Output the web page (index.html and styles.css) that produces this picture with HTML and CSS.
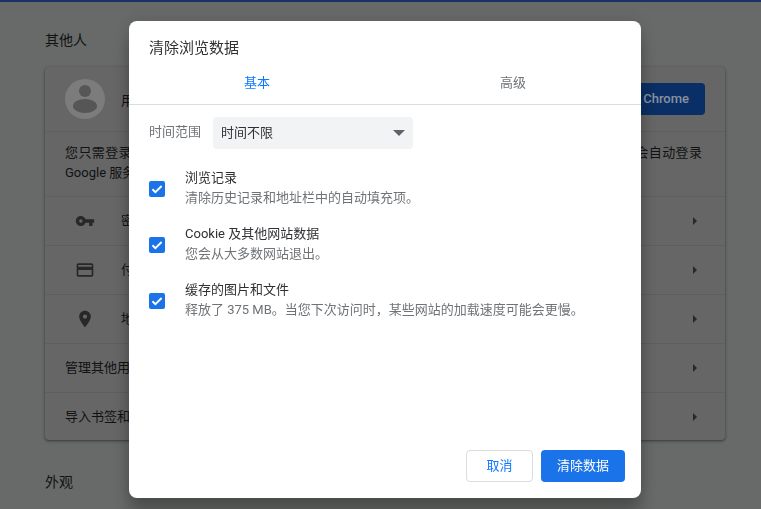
FILE: index.html
```html
<!DOCTYPE html>
<html lang="zh-CN">
<head>
    <meta charset="UTF-8">
    <title>设置</title>
    <link rel="stylesheet" href="styles.css">
</head>
<body>

    <div class="top-bar"></div>

    <!-- Settings page behind the dialog, already dimmed -->
    <main class="page">
        <h2 class="section-title">其他人</h2>
        <section class="card">
            <div class="account-row">
                <svg class="avatar" viewBox="0 0 40 40">
                    <circle cx="20" cy="20" r="20" fill="#7c7c7c"/>
                    <circle cx="20" cy="12" r="6" fill="#565656"/>
                    <ellipse cx="20" cy="27" rx="12" ry="7" fill="#565656"/>
                </svg>
                <span class="account-name">用户1</span>
                <button class="sync-button"><span class="btn-text">开启同步功能 Chrome</span></button>
            </div>
            <div class="account-info">
                <div class="info-line">您只需登录 Google 帐号，即可在所有设备上获取您的书签、历史记录、密码和其他设置。您还将会自动登录</div>
                <div>Google 服务。</div>
            </div>
            <div class="row">
                <svg class="row-icon" viewBox="0 0 24 24"><path d="M12.65 10C11.83 7.67 9.61 6 7 6c-3.31 0-6 2.69-6 6s2.69 6 6 6c2.61 0 4.83-1.67 5.65-4H17v4h4v-4h2v-4H12.65zM7 14c-1.1 0-2-.9-2-2s.9-2 2-2 2 .9 2 2-.9 2-2 2z"/></svg>
                <span class="row-label">密码</span>
                <span class="arrow"></span>
            </div>
            <div class="row">
                <svg class="row-icon" viewBox="0 0 24 24"><path d="M20 4H4c-1.11 0-1.99.89-1.99 2L2 18c0 1.11.89 2 2 2h16c1.11 0 2-.89 2-2V6c0-1.11-.89-2-2-2zm0 14H4v-6h16v6zm0-10H4V6h16v2z"/></svg>
                <span class="row-label">付款方式</span>
                <span class="arrow"></span>
            </div>
            <div class="row">
                <svg class="row-icon" viewBox="0 0 24 24"><path d="M12 2C8.13 2 5 5.13 5 9c0 5.25 7 13 7 13s7-7.75 7-13c0-3.87-3.13-7-7-7zm0 9.5c-1.38 0-2.5-1.12-2.5-2.5s1.12-2.5 2.5-2.5 2.5 1.12 2.5 2.5-1.12 2.5-2.5 2.5z"/></svg>
                <span class="row-label">地址信息</span>
                <span class="arrow"></span>
            </div>
            <div class="row row-plain">
                <span class="row-label">管理其他用户</span>
                <span class="arrow"></span>
            </div>
            <div class="row row-plain row-last">
                <span class="row-label">导入书签和设置</span>
                <span class="arrow"></span>
            </div>
        </section>
        <h2 class="section-title section-next">外观</h2>
    </main>

    <!-- Clear browsing data dialog -->
    <div class="overlay">
        <div class="dialog">
            <h1 class="dialog-title">清除浏览数据</h1>

            <div class="tabs">
                <div class="tab tab-active">基本</div>
                <div class="tab">高级</div>
            </div>

            <div class="dialog-body">
                <div class="range">
                    <span class="range-label">时间范围</span>
                    <div class="select">
                        <span class="select-value">时间不限</span>
                        <span class="select-caret"></span>
                    </div>
                </div>

                <div class="option">
                    <svg class="checkbox" viewBox="0 0 16 16"><rect width="16" height="16" rx="2" fill="#1a73e8"/><path d="M3.4 8.2l3 3 6.2-6.2" fill="none" stroke="#fff" stroke-width="2"/></svg>
                    <div class="option-text">
                        <div class="option-title">浏览记录</div>
                        <div class="option-desc">清除历史记录和地址栏中的自动填充项。</div>
                    </div>
                </div>

                <div class="option">
                    <svg class="checkbox" viewBox="0 0 16 16"><rect width="16" height="16" rx="2" fill="#1a73e8"/><path d="M3.4 8.2l3 3 6.2-6.2" fill="none" stroke="#fff" stroke-width="2"/></svg>
                    <div class="option-text">
                        <div class="option-title">Cookie 及其他网站数据</div>
                        <div class="option-desc">您会从大多数网站退出。</div>
                    </div>
                </div>

                <div class="option">
                    <svg class="checkbox" viewBox="0 0 16 16"><rect width="16" height="16" rx="2" fill="#1a73e8"/><path d="M3.4 8.2l3 3 6.2-6.2" fill="none" stroke="#fff" stroke-width="2"/></svg>
                    <div class="option-text">
                        <div class="option-title">缓存的图片和文件</div>
                        <div class="option-desc">释放了 375 MB。当您下次访问时，某些网站的加载速度可能会更慢。</div>
                    </div>
                </div>
            </div>

            <div class="dialog-buttons">
                <button class="btn btn-cancel"><span class="btn-text">取消</span></button>
                <button class="btn btn-confirm"><span class="btn-text">清除数据</span></button>
            </div>
        </div>
    </div>

</body>
</html>
```

FILE: styles.css
```css
html, body {
    height: 100%;
    margin: 0;
    overflow: hidden;
    background-color: #676a68;
    color: #111213;
    font-family: Roboto, "Noto Sans CJK SC", sans-serif;
    font-size: 13px;
}

.top-bar {
    height: 2px;
    background-color: #1c2f66;
}

.page {
    width: 680px;
    margin-left: 45px;
}

.section-title {
    margin: 0;
    padding-top: 28px;
    height: 37px;
    font-size: 14px;
    font-weight: 400;
    line-height: 20px;
}

.section-next {
    padding-top: 32px;
}

/* Card */
.card {
    background-color: #666;
    border-radius: 4px;
    box-shadow: 0 1px 2px rgba(0, 0, 0, 0.3), 0 1px 3px 1px rgba(0, 0, 0, 0.15);
}

.account-row {
    display: flex;
    align-items: center;
    height: 64px;
    padding: 0 20px;
}

.avatar {
    width: 40px;
    height: 40px;
    margin-right: 16px;
}

.account-name {
    flex: 1;
}

.sync-button {
    height: 32px;
    width: 160px;
    padding: 0 16px;
    border: none;
    border-radius: 4px;
    background-color: #0a2f66;
    color: #87929f;
    font: 500 13px Roboto, "Noto Sans CJK SC", sans-serif;
    text-align: right;
}

.btn-text {
    display: block;
    padding-bottom: 4px;
}

.account-info {
    box-sizing: border-box;
    height: 65px;
    padding: 11px 23px 0 20px;
    border-top: 1px solid #5d5e5f;
    line-height: 20px;
    white-space: nowrap;
}

.info-line {
    text-align-last: justify;
}

.row {
    display: flex;
    align-items: center;
    box-sizing: border-box;
    height: 49px;
    padding: 0 28px 0 30px;
    border-top: 1px solid #5d5e5f;
}

.row-plain {
    padding-left: 20px;
}

.row-last {
    height: 48px;
}

.row-icon {
    width: 20px;
    height: 20px;
    margin-right: 26px;
    fill: #262829;
}

.row-label {
    flex: 1;
    padding-bottom: 3px;
}

.arrow {
    width: 0;
    height: 0;
    border-left: 4px solid #262829;
    border-top: 4px solid transparent;
    border-bottom: 4px solid transparent;
}

/* Dialog */
.overlay {
    position: fixed;
    top: 0;
    left: 0;
    width: 100%;
    height: 100%;
}

.dialog {
    display: flex;
    flex-direction: column;
    box-sizing: border-box;
    width: 512px;
    height: 477px;
    margin: 21px 0 0 129px;
    background-color: #fff;
    color: #303134;
    border-radius: 8px;
    box-shadow: 0 0 16px rgba(0, 0, 0, 0.12), 0 16px 16px rgba(0, 0, 0, 0.24);
}

.dialog-title {
    margin: 0;
    padding: 16px 20px 0;
    height: 35px;
    font-size: 15px;
    font-weight: 400;
    line-height: 22px;
}

.tabs {
    display: flex;
    height: 32px;
    border-bottom: 1px solid #dadce0;
}

.tab {
    flex: 1;
    padding-top: 1px;
    text-align: center;
    line-height: 20px;
    color: #6f7377;
}

.tab-active {
    color: #0f78ff;
}

.dialog-body {
    flex: 1;
    padding: 12px 20px 0;
}

.range {
    display: flex;
    align-items: center;
    margin-bottom: 20px;
}

.range-label {
    width: 64px;
    padding-bottom: 5px;
    color: #6f7377;
}

.select {
    display: flex;
    align-items: center;
    justify-content: space-between;
    box-sizing: border-box;
    width: 200px;
    height: 32px;
    padding: 0 8px;
    background-color: #f1f3f4;
    border-radius: 4px;
}

.select-value {
    padding-bottom: 4px;
}

.select-caret {
    width: 0;
    height: 0;
    border-top: 6px solid #5f6368;
    border-left: 6px solid transparent;
    border-right: 6px solid transparent;
}

.option {
    display: flex;
    align-items: center;
    height: 40px;
    margin-bottom: 16px;
}

.checkbox {
    width: 16px;
    height: 16px;
    margin-right: 20px;
}

.option-text {
    padding-bottom: 2px;
}

.option-title, .option-desc {
    line-height: 20px;
}

.option-desc {
    color: #6f7377;
}

.dialog-buttons {
    display: flex;
    justify-content: flex-end;
    gap: 8px;
    padding: 0 16px 16px;
}

.btn {
    height: 32px;
    padding: 0 16px;
    border-radius: 4px;
    font: 400 13px Roboto, "Noto Sans CJK SC", sans-serif;
}

.btn-cancel {
    width: 67px;
    border: 1px solid #dadce0;
    background-color: #fff;
    color: #0f78ff;
}

.btn-confirm {
    width: 84px;
    border: none;
    background-color: #1a73e8;
    color: #fff;
}
```
